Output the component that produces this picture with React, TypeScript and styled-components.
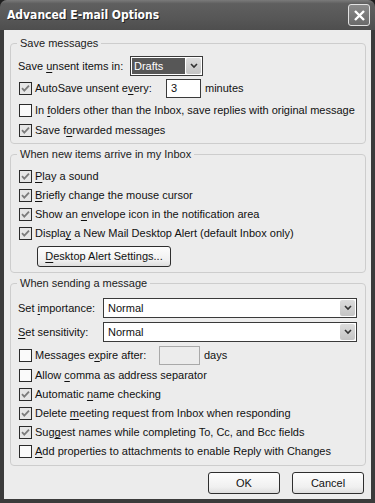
import React from 'react'
import styled, { createGlobalStyle } from 'styled-components'

const GlobalStyle = createGlobalStyle`
    html, body {
        margin: 0;
        padding: 0;
        background: #1e1e1e;
    }
    body {
        font-family: 'Liberation Sans', Arial, sans-serif;
        font-size: 11px;
        line-height: 13px;
        color: #111;
    }
`

type CheckRow = { label: React.ReactNode; checked: boolean }

const Key = styled.span`
    text-decoration: underline;
    text-underline-offset: 2px;
`

const Check = ({ checked }: { checked: boolean }) => (
    <CheckBox $checked={checked}>
        {checked && (
            <svg width="9" height="9" viewBox="0 0 9 9">
                <path
                    d="M1 4.2 L3.3 6.6 L8 1.6"
                    fill="none"
                    stroke="#7c7c7c"
                    strokeWidth="1.8"
                />
            </svg>
        )}
    </CheckBox>
)

const Arrow = () => (
    <ArrowBtn>
        <svg width="8" height="6" viewBox="0 0 8 6">
            <path d="M1 1 L4 4 L7 1" fill="none" stroke="#333" strokeWidth="1.6" />
        </svg>
    </ArrowBtn>
)

const CheckItem = ({ label, checked }: CheckRow) => (
    <Row>
        <Check checked={checked} />
        <Label>{label}</Label>
    </Row>
)

const inboxRows: CheckRow[] = [
    { label: <><Key>P</Key>lay a sound</>, checked: true },
    { label: <><Key>B</Key>riefly change the mouse cursor</>, checked: true },
    { label: <>Show an <Key>e</Key>nvelope icon in the notification area</>, checked: true },
    { label: <>Displa<Key>y</Key> a New Mail Desktop Alert (default Inbox only)</>, checked: true },
]

const sendRows: CheckRow[] = [
    { label: <>Allow <Key>c</Key>omma as address separator</>, checked: false },
    { label: <>Automatic <Key>n</Key>ame checking</>, checked: true },
    { label: <>Delete <Key>m</Key>eeting request from Inbox when responding</>, checked: true },
    { label: <>Sug<Key>g</Key>est names while completing To, Cc, and Bcc fields</>, checked: true },
    { label: <><Key>A</Key>dd properties to attachments to enable Reply with Changes</>, checked: false },
]

export default function App() {
    return (
        <>
            <GlobalStyle />
            <Window>
                <TitleBar>
                    <Title>Advanced E-mail Options</Title>
                    <CloseBtn>
                        <svg width="13" height="13" viewBox="0 0 13 13">
                            <path d="M2 2 L11 11 M11 2 L2 11" stroke="#fff" strokeWidth="2.4" />
                        </svg>
                    </CloseBtn>
                </TitleBar>
                <Body>
                    <Group $top={5} $bottom={3}>
                        <Legend>Save messages</Legend>
                        <Row $height={22}>
                            <FieldLabel $width={112}>
                                Save <Key>u</Key>nsent items in:
                            </FieldLabel>
                            <Select $width={73}>
                                <Selected>Drafts</Selected>
                                <Arrow />
                            </Select>
                        </Row>
                        <Row $height={23}>
                            <Check checked />
                            <Label $width={131}>
                                AutoSave unsent e<Key>v</Key>ery:
                            </Label>
                            <TextInput $width={35}>3</TextInput>
                            <After>minutes</After>
                        </Row>
                        <Row $height={21}>
                            <Check checked={false} />
                            <Label>
                                In <Key>f</Key>olders other than the Inbox, save replies with original message
                            </Label>
                        </Row>
                        <CheckItem
                            checked
                            label={<>Save f<Key>o</Key>rwarded messages</>}
                        />
                    </Group>

                    <Group $top={6} $bottom={5}>
                        <Legend>When new items arrive in my Inbox</Legend>
                        {inboxRows.map((r, i) => (
                            <CheckItem key={i} {...r} />
                        ))}
                        <ButtonRow>
                            <Button $width={134} $height={21}>
                                <Key>D</Key>esktop Alert Settings...
                            </Button>
                        </ButtonRow>
                    </Group>

                    <Group $top={6} $bottom={4}>
                        <Legend>When sending a message</Legend>
                        <Row $height={24}>
                            <FieldLabel $width={85}>
                                Set <Key>i</Key>mportance:
                            </FieldLabel>
                            <Select $grow>
                                <Value>Normal</Value>
                                <Arrow />
                            </Select>
                        </Row>
                        <Row $height={24}>
                            <FieldLabel $width={85}>
                                <Key>S</Key>et sensitivity:
                            </FieldLabel>
                            <Select $grow>
                                <Value>Normal</Value>
                                <Arrow />
                            </Select>
                        </Row>
                        <Row $height={22}>
                            <Check checked={false} />
                            <Label $width={124}>
                                Messages e<Key>x</Key>pire after:
                            </Label>
                            <TextInput $width={41} $disabled />
                            <After>days</After>
                        </Row>
                        {sendRows.map((r, i) => (
                            <CheckItem key={i} {...r} />
                        ))}
                    </Group>

                    <Footer>
                        <Button $width={72}>OK</Button>
                        <Button $width={72}>Cancel</Button>
                    </Footer>
                </Body>
            </Window>
        </>
    )
}

const Window = styled.div`
    width: 375px;
    height: 503px;
    box-sizing: border-box;
    display: flex;
    flex-direction: column;
    background: #3b3b3b;
    border-radius: 7px 7px 0 0;
    overflow: hidden;
`

const TitleBar = styled.div`
    height: 30px;
    flex: none;
    display: flex;
    align-items: center;
    justify-content: space-between;
    padding: 0 5px 0 7px;
    background: linear-gradient(#7a7a7a 0%, #5f5f5f 12%, #575757 60%, #4e4e4e 100%);
`

const Title = styled.div`
    font-family: 'DejaVu Sans Condensed', 'DejaVu Sans', sans-serif;
    font-weight: bold;
    font-size: 12px;
    color: #fff;
    text-shadow: 1px 1px 0 #222;
    padding-top: 1px;
`

const CloseBtn = styled.div`
    width: 20px;
    height: 20px;
    border: 1px solid #e2e2e2;
    border-radius: 3px;
    background: linear-gradient(#8a8a8a, #6a6a6a);
    display: flex;
    align-items: center;
    justify-content: center;
`

const Body = styled.div`
    flex: 1;
    margin: 0 4px 4px;
    background: #ececec;
    padding: 7px 5px 0 6px;
    display: flex;
    flex-direction: column;
    gap: 4px;
`

const Group = styled.fieldset<{ $top: number; $bottom: number }>`
    margin: 0;
    min-width: 0;
    padding: ${p => p.$top}px 8px ${p => p.$bottom}px 7px;
    border: 1px solid #cdcdcd;
    border-radius: 4px;
    display: flex;
    flex-direction: column;
`

const Legend = styled.legend`
    padding: 0 3px;
    margin-left: -1px;
    color: #222;
`

const Row = styled.div<{ $height?: number }>`
    display: flex;
    align-items: center;
    height: ${p => p.$height ?? 19}px;
`

const CheckBox = styled.div<{ $checked: boolean }>`
    width: 11px;
    height: 11px;
    flex: none;
    margin: 0 3px 0 1px;
    border: 1px solid #2a2a2a;
    background: ${p => (p.$checked ? '#e6e6e6' : '#fafafa')};
    display: flex;
    align-items: center;
    justify-content: center;
`

const Label = styled.span<{ $width?: number }>`
    white-space: nowrap;
    ${p => (p.$width ? `width: ${p.$width}px; flex: none;` : '')}
`

const FieldLabel = styled.span<{ $width: number }>`
    width: ${p => p.$width}px;
    flex: none;
    white-space: nowrap;
`

const Select = styled.div<{ $width?: number; $grow?: boolean }>`
    height: 20px;
    box-sizing: border-box;
    ${p => (p.$grow ? 'flex: 1;' : `width: ${p.$width}px;`)}
    border: 1px solid #3a3a3a;
    background: #fff;
    display: flex;
    align-items: stretch;
    padding: 1px;
    gap: 1px;
`

const Selected = styled.div`
    flex: 1;
    background: #575757;
    color: #fff;
    padding-left: 2px;
    display: flex;
    align-items: center;
`

const Value = styled.div`
    flex: 1;
    padding-left: 3px;
    display: flex;
    align-items: center;
`

const ArrowBtn = styled.div`
    width: 15px;
    flex: none;
    background: linear-gradient(#dcdcdc, #c4c4c4);
    border-radius: 2px;
    display: flex;
    align-items: center;
    justify-content: center;
`

const TextInput = styled.div<{ $width: number; $disabled?: boolean }>`
    width: ${p => p.$width}px;
    height: 19px;
    box-sizing: border-box;
    flex: none;
    border: 1px solid ${p => (p.$disabled ? '#a9a9a9' : '#3a3a3a')};
    background: ${p => (p.$disabled ? '#ececec' : '#fff')};
    padding-left: 4px;
    display: flex;
    align-items: center;
`

const After = styled.span`
    margin-left: 4px;
`

const ButtonRow = styled.div`
    padding: 3px 0 0 19px;
    display: flex;
`

const Button = styled.div<{ $width: number; $height?: number }>`
    width: ${p => p.$width}px;
    height: ${p => p.$height ?? 22}px;
    box-sizing: border-box;
    border: 1px solid #2e2e2e;
    border-radius: 3px;
    background: linear-gradient(#fdfdfd, #f0f0f0 70%, #dedede);
    display: flex;
    align-items: center;
    justify-content: center;
`

const Footer = styled.div`
    display: flex;
    justify-content: flex-end;
    gap: 12px;
    padding: 2px 2px 0 0;
`
